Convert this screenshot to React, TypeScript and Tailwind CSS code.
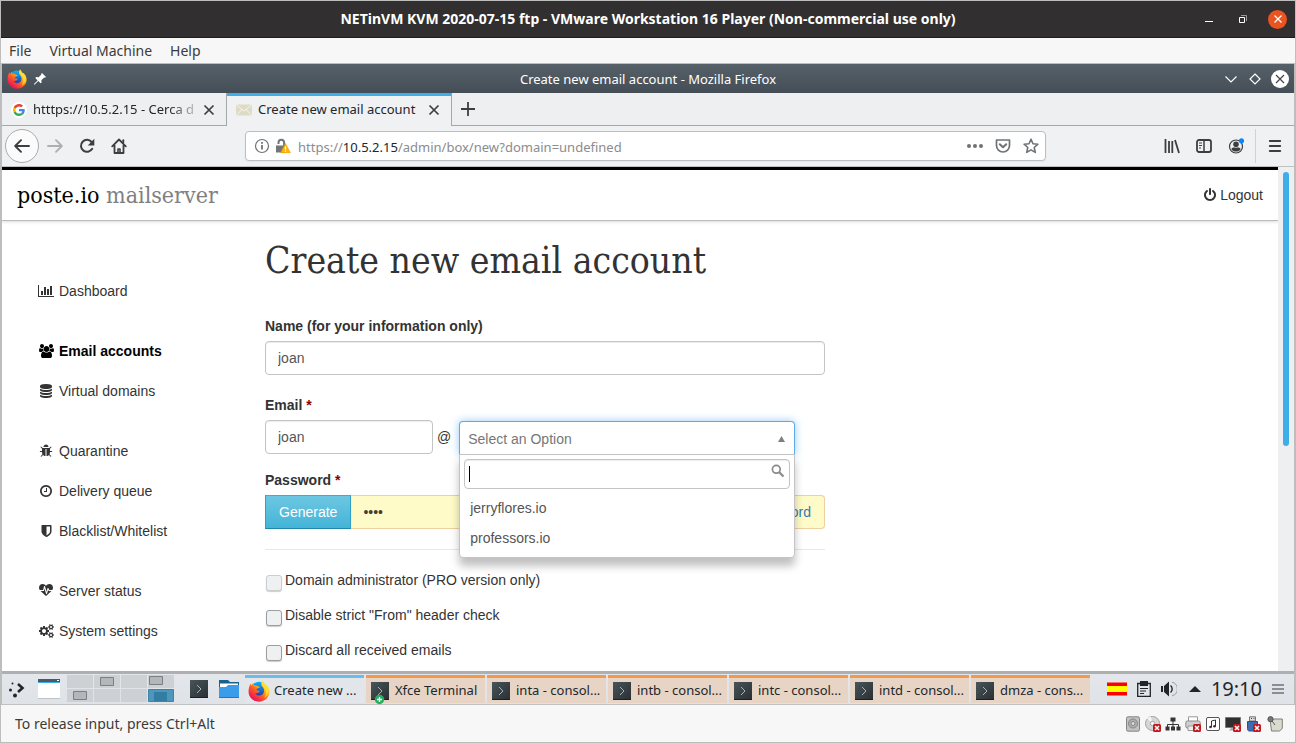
import React from "react";

const FA = {
  chart:
    "M640 896v512h-256v-512h256zm384-512v1024h-256v-1024h256zm1024 1152v128h-2048v-1536h128v1408h1920zm-640-896v768h-256v-768h256zm384-384v1152h-256v-1152h256z",
  users:
    "M593 896q-162 5-265 128h-134q-82 0-138-40.5t-56-118.5q0-353 124-353 6 0 43.5 21t97.5 42.5 119 21.5q67 0 133-23-5 37-5 66 0 139 81 256zm1071 637q0 120-73 189.5t-194 69.5h-874q-121 0-194-69.5t-73-189.5q0-53 3.5-103.5t14-109 26.5-108.5 43-97.5 62-81 85.5-53.5 111.5-20q10 0 43 21.5t73 48 107 48 135 21.5 135-21.5 107-48 73-48 43-21.5q61 0 111.5 20t85.5 53.5 62 81 43 97.5 26.5 108.5 14 109 3.5 103.5zm-1024-1277q0 106-75 181t-181 75-181-75-75-181 75-181 181-75 181 75 75 181zm704 384q0 159-112.5 271.5t-271.5 112.5-271.5-112.5-112.5-271.5 112.5-271.5 271.5-112.5 271.5 112.5 112.5 271.5zm576 225q0 78-56 118.5t-138 40.5h-134q-103-123-265-128 81-117 81-256 0-29-5-66 66 23 133 23 59 0 119-21.5t97.5-42.5 43.5-21q124 0 124 353zm-128-609q0 106-75 181t-181 75-181-75-75-181 75-181 181-75 181 75 75 181z",
  database:
    "M896 768q237 0 443-43t325-127v170q0 69-103 128t-280 93.5-385 34.5-385-34.5-280-93.5-103-128v-170q119 84 325 127t443 43zm0 768q237 0 443-43t325-127v170q0 69-103 128t-280 93.5-385 34.5-385-34.5-280-93.5-103-128v-170q119 84 325 127t443 43zm0-384q237 0 443-43t325-127v170q0 69-103 128t-280 93.5-385 34.5-385-34.5-280-93.5-103-128v-170q119 84 325 127t443 43zm0-1152q208 0 385 34.5t280 93.5 103 128v128q0 69-103 128t-280 93.5-385 34.5-385-34.5-280-93.5-103-128v-128q0-69 103-128t280-93.5 385-34.5z",
  bug:
    "M1696 960q0 26-19 45t-45 19h-224q0 171-67 290l208 209q19 19 19 45t-19 45q-18 19-45 19t-45-19l-198-197q-5 5-15 13t-42 28.5-65 36.5-82 29-97 13v-896h-128v896q-51 0-101.5-13.5t-87-33-66-39-43.5-32.5l-15-14-183 207q-20 21-48 21-24 0-43-16-19-18-20.5-44.5t15.5-46.5l202-227q-58-114-58-274h-224q-26 0-45-19t-19-45 19-45 45-19h224v-294l-173-173q-19-19-19-45t19-45 45-19 45 19l173 173h844l173-173q19-19 45-19t45 19 19 45-19 45l-173 173v294h224q26 0 45 19t19 45zm-480-576h-640q0-133 93.5-226.5t226.5-93.5 226.5 93.5 93.5 226.5z",
  clock:
    "M1024 544v448q0 14-9 23t-23 9h-320q-14 0-23-9t-9-23v-64q0-14 9-23t23-9h224v-352q0-14 9-23t23-9h64q14 0 23 9t9 23zm416 352q0-148-73-273t-198-198-273-73-273 73-198 198-73 273 73 273 198 198 273 73 273-73 198-198 73-273zm224 0q0 209-103 385.5t-279.5 279.5-385.5 103-385.5-103-279.5-279.5-103-385.5 103-385.5 279.5-279.5 385.5-103 385.5 103 279.5 279.5 103 385.5z",
  shield:
    "M1408 960v-640h-448v1137q119-63 213-137 235-184 235-360zm192-768v768q0 86-33.5 170.5t-83 150-118 127.5-126.5 103-121 77.5-89.5 49.5-42.5 20q-12 6-26 6t-26-6q-16-7-42.5-20t-89.5-49.5-121-77.5-126.5-103-118-127.5-83-150-33.5-170.5v-768q0-26 19-45t45-19h1152q26 0 45 19t19 45z",
  heartbeat:
    "M1280 896h305q-5 6-10 10.5t-9 7.5l-3 4-623 600q-18 18-44 18t-44-18l-624-602q-5-2-21-20h369q22 0 39.5-13.5t22.5-34.5l70-281 190 667q6 20 23 33t39 13q21 0 38-13t23-33l146-485 56 112q18 35 57 35zm512-428q0 145-103 300h-369l-111-221q-8-17-25.5-27t-36.5-8q-45 5-56 46l-129 430-196-686q-6-20-23.5-33t-39.5-13-39 13.5-22 34.5l-116 464h-423q-103-155-103-300 0-220 127-344t351-124q62 0 126.5 21.5t120 58 95.5 68.5 76 68q36-36 76-68t95.5-68.5 120-58 126.5-21.5q224 0 351 124t127 344z",
  cogs:
    "M896 896q0-106-75-181t-181-75-181 75-75 181 75 181 181 75 181-75 75-181zm768 512q0-52-38-90t-90-38-90 38-38 90q0 53 37.5 90.5t90.5 37.5 90.5-37.5 37.5-90.5zm0-1024q0-52-38-90t-90-38-90 38-38 90q0 53 37.5 90.5t90.5 37.5 90.5-37.5 37.5-90.5zm-384 421v185q0 10-7 19.5t-16 10.5l-155 24q-11 35-32 76 34 48 90 115 7 11 7 20 0 12-7 19-23 30-82.5 89.5t-78.5 59.5q-11 0-21-7l-115-90q-37 19-77 31-11 108-23 155-7 24-30 24h-186q-11 0-20-7.5t-10-17.5l-23-153q-34-10-75-31l-118 89q-7 7-20 7-11 0-21-8-144-133-144-160 0-9 7-19 10-14 41-53t47-61q-23-44-35-82l-152-24q-10-1-17-9.5t-7-19.5v-185q0-10 7-19.5t16-10.5l155-24q11-35 32-76-34-48-90-115-7-11-7-20 0-12 7-20 22-30 82-89t79-59q11 0 21 7l115 90q34-18 77-32 11-108 23-154 7-24 30-24h186q11 0 20 7.5t10 17.5l23 153q34 10 75 31l118-89q8-7 20-7 11 0 21 8 144 133 144 160 0 8-7 19-12 16-42 54t-45 60q23 48 34 82l152 23q10 2 17 10.5t7 19.5zm640 533v140q0 16-149 31-12 27-30 52 51 113 51 138 0 4-4 7-122 71-124 71-8 0-46-47t-52-68q-20 2-30 2t-30-2q-14 21-52 68t-46 47q-2 0-124-71-4-3-4-7 0-25 51-138-18-25-30-52-149-15-149-31v-140q0-16 149-31 13-29 30-52-51-113-51-138 0-4 4-7 4-2 35-20t59-34 30-16q8 0 46 46.5t52 67.5q20-2 30-2t30 2q51-71 92-112l6-2q4 0 124 70 4 3 4 7 0 25-51 138 17 23 30 52 149 15 149 31zm0-1024v140q0 16-149 31-12 27-30 52 51 113 51 138 0 4-4 7-122 71-124 71-8 0-46-47t-52-68q-20 2-30 2t-30-2q-14 21-52 68t-46 47q-2 0-124-71-4-3-4-7 0-25 51-138-18-25-30-52-149-15-149-31v-140q0-16 149-31 13-29 30-52-51-113-51-138 0-4 4-7 4-2 35-20t59-34 30-16q8 0 46 46.5t52 67.5q20-2 30-2t30 2q51-71 92-112l6-2q4 0 124 70 4 3 4 7 0 25-51 138 17 23 30 52 149 15 149 31z",
  power:
    "M1664 896q0 156-61 298t-164 245-245 164-298 61-298-61-245-164-164-245-61-298q0-182 80.5-343t226.5-270q43-32 95.5-25t83.5 50q32 42 24.5 94.5t-49.5 84.5q-98 74-151.5 181t-53.5 228q0 104 40.5 198.5t109.5 163.5 163.5 109.5 198.5 40.5 198.5-40.5 163.5-109.5 109.5-163.5 40.5-198.5q0-121-53.5-228t-151.5-181q-42-32-49.5-84.5t24.5-94.5q31-43 84-50t95 25q146 109 226.5 270t80.5 343zm-640-768v640q0 52-38 90t-90 38-90-38-38-90v-640q0-52 38-90t90-38 90 38 38 90z",
};

type IconName = keyof typeof FA;

function Glyph({ name, wide = 1792 }: { name: IconName; wide?: number }) {
  return (
    <svg viewBox={`0 0 ${wide} 1792`} className="h-3.5 w-auto" fill="currentColor" aria-hidden="true">
      <path d={FA[name]} />
    </svg>
  );
}

function Firefox({ className }: { className: string }) {
  return (
    <svg viewBox="0 0 20 20" className={className} aria-hidden="true">
      <defs>
        <linearGradient id="fox" x1="0.85" y1="0.1" x2="0.2" y2="0.9">
          <stop offset="0" stopColor="#fff44f" />
          <stop offset="0.35" stopColor="#ffb01f" />
          <stop offset="0.6" stopColor="#ff5a26" />
          <stop offset="1" stopColor="#e8115b" />
        </linearGradient>
        <linearGradient id="globe" x1="0.5" y1="0" x2="0.5" y2="1">
          <stop offset="0" stopColor="#0ab4f5" />
          <stop offset="1" stopColor="#2b2a9c" />
        </linearGradient>
      </defs>
      <circle cx="10" cy="9" r="7.4" fill="url(#globe)" />
      <path
        d="M13 .5c1 1 1.6 1.900 1.900 3C17.800 4.500 19.600 7.500 19.600 10.500 19.600 15.800 15.300 19.700 10 19.700 4.500 19.700.5 15.500.5 10.500.5 7.500 1.300 5 2.400 3.200L3 5.100C3.600 4.100 4.300 3 5.200 2.400 5 3.300 5.200 4.200 5.700 4.700c1 0 2 0 2.700.7l2 .5c.4.8-.3 1.200-1.600 1.600-.6.300-.6 1.200-1.500 1.600.6.6 1.700.4 2.500.7 1 .400.8 1.200-.2 1.500-1 .3-1.900 1.200-3.200.8 1 1.600 2.700 2.300 4.500 2 2.300-.4 3.700-2.100 3.700-4.400 0-2-1-3.300-2-4C11.800 4.300 11.800 2 13 .5Z"
        fill="url(#fox)"
      />
      <path d="M13 .5c1 1 1.600 1.900 1.900 3 3 1.300 4.200 4 4 7-.6 3-2 4.900-4.300 6 1.800-2.400 2-5 1.400-7C15.300 7 11.600 5 13 .5Z" fill="#ffdf33" opacity=".8" />
    </svg>
  );
}

function TerminalIcon({ plus = false }: { plus?: boolean }) {
  return (
    <svg viewBox="0 0 18 22" className="h-[22px] w-[18px] shrink-0 overflow-visible" aria-hidden="true">
      <defs>
        <linearGradient id="term" x1="0" y1="0" x2="1" y2="1">
          <stop offset="0" stopColor="#47555a" />
          <stop offset="1" stopColor="#2a2f33" />
        </linearGradient>
      </defs>
      <rect y="2" width="18" height="18" fill="url(#term)" />
      <path d="M0 19.500h18" stroke="#1d2023" />
      <path d="M7 7l4 4-4 4" fill="none" stroke="#aab3b6" strokeWidth="1" />
      {plus && (
        <g>
          <circle cx="8.500" cy="19.500" r="4.700" fill="#27ae60" />
          <path d="M8.500 17v5M6 19.500h5" stroke="#fff" strokeWidth="1.300" />
        </g>
      )}
    </svg>
  );
}

function HostTitleBar() {
  return (
    <header className="grid h-[37px] shrink-0 grid-cols-[1fr_auto_1fr] items-center border-b border-[#1f1e1e] bg-[#312f2f] text-white">
      <span />
      <h1 className="text-[14px] leading-5 font-bold">
        NETinVM KVM 2020-07-15 ftp - VMware Workstation 16 Player (Non-commercial use only)
      </h1>
      <div className="flex items-center justify-end pr-2">
        <button aria-label="Minimize" className="flex h-6 w-[34px] items-center justify-center">
          <svg viewBox="0 0 12 12" className="size-3"><path d="M2 8.500h8" stroke="#fff" /></svg>
        </button>
        <button aria-label="Restore" className="flex h-6 w-[34px] items-center justify-center">
          <svg viewBox="0 0 12 12" className="size-3" fill="none">
            <path d="M4 2.500h5.500V8" stroke="#999" />
            <path d="M2.500 4.500h5v5h-5z" stroke="#fff" />
          </svg>
        </button>
        <button aria-label="Close" className="ml-2 flex size-[19px] items-center justify-center rounded-full bg-[#e95420]">
          <svg viewBox="0 0 10 10" className="size-2.5"><path d="M1.500 1.500l7 7M8.500 1.500l-7 7" stroke="#fff" strokeWidth="1.300" /></svg>
        </button>
      </div>
    </header>
  );
}

function GuestTitleBar() {
  return (
    <div className="grid h-[29px] shrink-0 grid-cols-[1fr_auto_1fr] items-center bg-linear-to-b from-[#566069] to-[#454e56] text-white">
      <div className="flex items-center gap-1.5 pl-[5px]">
        <Firefox className="size-5" />
        <svg viewBox="0 0 14 14" className="size-3.5" fill="#fff" aria-hidden="true">
          <path d="M9 1l4 4-1 .7-.9-.1-2.700 2.600.200 2.200-1 .9-2.300-2.300L1.500 12.700l-.6-.6L4.600 8.400 2.300 6.100l1-1 2.300.200 2.600-2.600L8.200 1.800z" />
        </svg>
      </div>
      <span className="text-[13px] leading-5">Create new email account - Mozilla Firefox</span>
      <div className="flex items-center justify-end gap-2 pr-[5px]">
        <button aria-label="Minimize window" className="flex size-4 items-center justify-center">
          <svg viewBox="0 0 14 14" className="size-3.5" fill="none"><path d="M1.500 4.500L7 10l5.500-5.500" stroke="#fff" strokeWidth="1.200" /></svg>
        </button>
        <button aria-label="Maximize window" className="flex size-4 items-center justify-center">
          <svg viewBox="0 0 14 14" className="size-3.5" fill="none"><path d="M7 2l5 5-5 5-5-5z" stroke="#fff" strokeWidth="1.200" /></svg>
        </button>
        <button aria-label="Close window" className="flex size-[18px] items-center justify-center rounded-full bg-white">
          <svg viewBox="0 0 12 12" className="size-3"><path d="M2 2l8 8M10 2l-8 8" stroke="#3f474e" strokeWidth="1.200" /></svg>
        </button>
      </div>
    </div>
  );
}

function CloseX() {
  return (
    <svg viewBox="0 0 12 12" className="size-3"><path d="M1.500 1.500l9 9M10.500 1.500l-9 9" stroke="#3c3f42" strokeWidth="1.700" /></svg>
  );
}

function Tabs() {
  return (
    <div role="tablist" className="flex h-[33px] shrink-0 bg-[#eeeff1] text-[13px] text-[#232629]">
      <div role="tab" className="flex w-[225px] items-center border-r border-b border-[#a5a8ab] pt-0.5 pr-[11px] pl-[9px]">
        <span className="flex size-4 shrink-0 items-center justify-center rounded-full bg-white">
          <svg viewBox="0 0 48 48" className="size-3" aria-hidden="true">
            <path fill="#EA4335" d="M24 9.500c3.540 0 6.710 1.220 9.210 3.600l6.850-6.850C35.900 2.380 30.470 0 24 0 14.620 0 6.510 5.380 2.560 13.220l7.980 6.190C12.430 13.720 17.740 9.500 24 9.500z" />
            <path fill="#4285F4" d="M46.980 24.550c0-1.570-.15-3.090-.38-4.550H24v9.020h12.940c-.58 2.960-2.260 5.480-4.780 7.180l7.730 6c4.510-4.180 7.090-10.360 7.090-17.650z" />
            <path fill="#FBBC05" d="M10.530 28.590c-.48-1.450-.76-2.990-.76-4.590s.27-3.140.76-4.590l-7.980-6.190C.92 16.460 0 20.120 0 24c0 3.880.92 7.540 2.560 10.780l7.970-6.190z" />
            <path fill="#34A853" d="M24 48c6.480 0 11.930-2.130 15.890-5.810l-7.730-6c-2.150 1.450-4.920 2.300-8.160 2.300-6.260 0-11.570-4.220-13.470-9.910l-7.980 6.190C6.510 42.620 14.620 48 24 48z" />
          </svg>
        </span>
        <span className="ml-1.5 min-w-0 flex-1 mask-r-from-80% mask-r-to-100% whitespace-nowrap">htttps://10.5.2.15 - Cerca d</span>
        <button aria-label="Close first tab" className="shrink-0"><CloseX /></button>
      </div>
      <div role="tab" aria-selected="true" className="flex w-[225px] items-center border-t-3 border-r border-t-[#3daee9] border-r-[#a5a8ab] bg-[#f0f1f3] pr-[11px] pb-0.5 pl-[9px]">
        <svg viewBox="0 0 16 12" className="h-3 w-4 shrink-0" aria-hidden="true">
          <path d="M0 .5h16v11H0z" fill="#dddbc6" />
          <path d="M0 .5l8 6.500 8-6.500M0 11.500l6-6M16 11.500l-6-6" fill="none" stroke="#f6f5ea" />
        </svg>
        <span className="mx-1.5 min-w-0 flex-1 whitespace-nowrap">Create new email account</span>
        <button aria-label="Close current tab" className="shrink-0"><CloseX /></button>
      </div>
      <div className="flex flex-1 items-center border-b border-[#a5a8ab] pl-2">
        <button aria-label="New tab">
          <svg viewBox="0 0 16 16" className="size-4"><path d="M8 1v14M1 8h14" stroke="#3c3f42" strokeWidth="1.800" /></svg>
        </button>
      </div>
    </div>
  );
}

function Toolbar() {
  return (
    <div className="flex h-[41px] shrink-0 items-center border-b border-[#bfc0c2] bg-[#f0f1f3] text-[#3c3f42]">
      <div className="flex w-[243px] shrink-0 items-center pl-[3px]">
        <button aria-label="Back" className="flex size-[34px] items-center justify-center rounded-full border border-[#a9abad] bg-[#fbfbfc]">
          <svg viewBox="0 0 16 16" className="size-4" fill="none" stroke="currentColor" strokeWidth="1.900" strokeLinecap="round" strokeLinejoin="round"><path d="M15 8H1.500M7 2.200L1.200 8 7 13.800" /></svg>
        </button>
        <button aria-label="Forward" className="flex size-8 items-center justify-center text-[#adafb1]">
          <svg viewBox="0 0 16 16" className="size-4" fill="none" stroke="currentColor" strokeWidth="1.900" strokeLinecap="round" strokeLinejoin="round"><path d="M1 8h13.500M9 2.200L14.800 8 9 13.800" /></svg>
        </button>
        <button aria-label="Reload" className="flex size-8 items-center justify-center">
          <svg viewBox="0 0 16 16" className="size-4"><path d="M13.200 10.800A6 6 0 1 1 12.600 4" fill="none" stroke="currentColor" strokeWidth="2" strokeLinecap="round" /><path d="M15.300.8v6.600H8.800z" fill="currentColor" /></svg>
        </button>
        <button aria-label="Home" className="flex size-8 items-center justify-center">
          <svg viewBox="0 0 16 16" className="size-4" fill="none" stroke="currentColor" strokeWidth="1.800" strokeLinejoin="round" strokeLinecap="round"><path d="M1.200 8.300L8 1.500l6.800 6.800M3.500 7v8h9V7" /><path d="M7 15v-4h2v4" strokeWidth="1.600" /><path d="M12.300 4.500V2.200" /></svg>
        </button>
      </div>
      <div className="flex h-[30px] w-[62%] items-center rounded-sm border border-[#bcbebf] bg-white pr-1.5 pl-2 text-[#6f7274] shadow-xs">
        <svg viewBox="0 0 16 16" className="size-4 shrink-0" fill="none" stroke="currentColor" aria-hidden="true"><circle cx="8" cy="8" r="6.500" strokeWidth="1.200" /><path d="M8 7v4.500" strokeWidth="1.800" /><path d="M8 4v1.800" strokeWidth="1.800" /></svg>
        <svg viewBox="0 0 16 16" className="ml-[5px] size-4 shrink-0" aria-hidden="true">
          <path d="M3.500 6V4.500a2.800 2.800 0 0 1 5.600 0V8" fill="none" stroke="#737577" strokeWidth="2" />
          <path d="M1 7.500h9v7H1z" fill="#737577" />
          <path d="M10.500 5.500l4.800 9.200H5.700z" fill="#ffb700" stroke="#e79a00" strokeWidth=".6" strokeLinejoin="round" />
          <path d="M10.500 8.600v3M10.500 12.500v1.200" stroke="#fff" strokeWidth="1.200" />
        </svg>
        <div className="ml-[7px] flex-1 pt-0.5 text-[13px] leading-5 whitespace-nowrap">
          <a href="https://10.5.2.15/admin/box/new?domain=undefined" className="text-[#8a8c8e]">
            https://<span className="text-[#232629]">10.5.2.15</span>/admin/box/new?domain=undefined
          </a>
        </div>
        <button aria-label="Page actions"><svg viewBox="0 0 16 16" className="size-4" fill="currentColor"><circle cx="2" cy="8" r="2" /><circle cx="8" cy="8" r="2" /><circle cx="14" cy="8" r="2" /></svg></button>
        <button aria-label="Save to Pocket" className="ml-3"><svg viewBox="0 0 16 16" className="size-4" fill="none" stroke="currentColor" strokeWidth="1.700" strokeLinecap="round" strokeLinejoin="round"><path d="M1.500 2h13v5.500a6.500 6.500 0 0 1-13 0z" /><path d="M4.800 6.300L8 9.300l3.200-3" strokeWidth="2" /></svg></button>
        <button aria-label="Bookmark this page" className="ml-3"><svg viewBox="0 0 16 16" className="size-4" fill="none" stroke="currentColor" strokeWidth="1.600" strokeLinejoin="round"><path d="M8 1.200l2 4.500 4.900.5-3.700 3.300 1.100 4.900L8 11.900l-4.300 2.500 1.100-4.900L1.100 6.200 6 5.700z" /></svg></button>
      </div>
      <div className="ml-auto flex h-full items-center">
        <button aria-label="Library" className="flex size-8 items-center justify-center">
          <svg viewBox="0 0 16 16" className="size-4" stroke="currentColor" strokeWidth="1.800"><path d="M1.500 1v14M5 3v12M8.300 3v12M11 2l4 13" /></svg>
        </button>
        <button aria-label="Sidebars" className="flex size-8 items-center justify-center">
          <svg viewBox="0 0 16 16" className="size-4" fill="none" stroke="currentColor"><rect x="1" y="2" width="14" height="12" rx="2" strokeWidth="1.800" /><path d="M8 2v12" strokeWidth="1.500" /><path d="M3 5h3M3 7.500h3M3 10h2" /></svg>
        </button>
        <button aria-label="Account" className="flex size-8 items-center justify-center">
          <svg viewBox="0 0 16 16" className="size-4"><circle cx="8" cy="8.500" r="6.500" fill="none" stroke="currentColor" strokeWidth="1.200" /><circle cx="8" cy="6.300" r="2.800" fill="currentColor" /><path d="M3.300 11c1.300-2 3-1.600 4.700-1.200 1.700-.4 3.400-.8 4.700 1.200-1 1.800-2.800 2.600-4.700 2.600S4.300 12.800 3.300 11z" fill="currentColor" /><circle cx="13.500" cy="2.800" r="2.600" fill="#0a84ff" /></svg>
        </button>
        <span className="ml-[3px] h-[34px] border-l border-[#d0d2d4]" />
        <button aria-label="Open menu" className="flex h-8 w-[38px] items-center justify-center">
          <svg viewBox="0 0 16 16" className="size-4" stroke="currentColor" strokeWidth="1.900" strokeLinecap="round"><path d="M2.800 3h10.400M2.800 8h10.400M2.800 13h10.400" /></svg>
        </button>
      </div>
    </div>
  );
}

const NAV: { label: string; icon: IconName; wide?: number; active?: boolean }[][] = [
  [{ label: "Dashboard", icon: "chart", wide: 2048 }],
  [
    { label: "Email accounts", icon: "users", wide: 1920, active: true },
    { label: "Virtual domains", icon: "database" },
  ],
  [
    { label: "Quarantine", icon: "bug" },
    { label: "Delivery queue", icon: "clock" },
    { label: "Blacklist/Whitelist", icon: "shield" },
  ],
  [
    { label: "Server status", icon: "heartbeat" },
    { label: "System settings", icon: "cogs", wide: 1920 },
  ],
];

const SLAB = "font-['Roboto_Slab','DejaVu_Serif_Condensed','DejaVu_Serif',serif]";
const FIELD =
  "h-[34px] rounded-sm border border-[#c4c4c4] bg-white px-3 text-[#555] shadow-[inset_0_1px_1px_rgba(0,0,0,0.075)] outline-none";

function Sidebar() {
  return (
    <nav className="flex w-[263px] shrink-0 flex-col gap-5 pt-[50px] pl-[35px]">
      {NAV.map((group, i) => (
        <ul key={i}>
          {group.map((item) => (
            <li key={item.label}>
              <a href="#" className={item.active ? "flex h-10 items-center gap-1 font-bold text-black" : "flex h-10 items-center gap-1 text-[#333]"}>
                <span className="flex w-[18px] justify-center"><Glyph name={item.icon} wide={item.wide} /></span>
                {item.label}
              </a>
            </li>
          ))}
        </ul>
      ))}
    </nav>
  );
}

function DomainSelect() {
  return (
    <div className="relative ml-2 w-[60%] self-end">
      <button
        type="button"
        id="domain"
        aria-haspopup="listbox"
        aria-expanded="true"
        className="flex h-[34px] w-full items-center justify-between rounded-t-sm border border-b-0 border-[#5fa8e6] bg-white pr-[9px] pl-2 text-[#777] shadow-[0_0_8px_rgba(82,168,236,0.6)]"
      >
        Select an Option
        <svg viewBox="0 0 7 6" className="h-1.5 w-[7px]"><path d="M3.500 0L7 6H0z" fill="#808080" /></svg>
      </button>
      <div className="absolute inset-x-0 top-full z-10 -mt-px rounded-b-sm border border-[#c4c4c4] bg-white p-1 shadow-[0_8px_8px_rgba(0,0,0,0.25)]">
        <div className="relative">
          <input aria-label="Search domains" className="block h-[30px] w-full rounded-sm border border-[#c4c4c4] pr-6 pl-1.5 shadow-[inset_0_1px_1px_rgba(0,0,0,0.075)] outline-none" />
          <span className="absolute top-[7px] left-[5px] h-4 border-l border-black" />
          <svg viewBox="0 0 14 14" className="absolute top-[5px] right-[5px] size-3.5" fill="none" stroke="#8a8a8a" aria-hidden="true">
            <circle cx="5.300" cy="5.300" r="3.900" strokeWidth="1.700" />
            <path d="M8.200 8.200l4.300 4.300" strokeWidth="2.200" />
          </svg>
        </div>
        <ul role="listbox" aria-label="Domains" className="pt-1 text-[#555]">
          <li role="option" aria-selected="false" className="h-[30px] px-1.5 leading-[30px]">jerryflores.io</li>
          <li role="option" aria-selected="false" className="h-[30px] px-1.5 leading-[30px]">professors.io</li>
        </ul>
      </div>
    </div>
  );
}

const CHECKS = [
  { id: "admin", label: "Domain administrator (PRO version only)", disabled: true },
  { id: "strict", label: 'Disable strict "From" header check', disabled: false },
  { id: "discard", label: "Discard all received emails", disabled: false },
];

function AccountForm() {
  return (
    <main className="min-w-0 flex-1 pt-5">
      <form className="max-w-[560px]">
        <h2 className={`${SLAB} text-[37px] leading-10 whitespace-nowrap text-[#333]`}>Create new email account</h2>
        <label htmlFor="name" className="mt-[35px] mb-[5px] block font-bold">Name (for your information only)</label>
        <input id="name" defaultValue="joan" className={`${FIELD} block w-full`} />

        <label htmlFor="email" className="mt-5 mb-[5px] block font-bold">Email <span className="text-[#8b0000]">*</span></label>
        <div className="flex h-[35px] items-start">
          <input id="email" defaultValue="joan" className={`${FIELD} w-[30%]`} />
          <span className="ml-1 leading-[34px]">@</span>
          <DomainSelect />
        </div>

        <label htmlFor="password" className="mt-[15px] mb-[5px] block font-bold">Password <span className="text-[#8b0000]">*</span></label>
        <div className="flex h-[34px]">
          <button type="button" className="border border-x-[#2fa0c6] border-t-[#3aafd4] border-b-[#1f87ab] bg-linear-to-b from-[#6cc7e2] to-[#43b4d8] px-[13px] text-white">Generate</button>
          <input id="password" type="password" defaultValue="1234" className="min-w-0 flex-1 border border-l-0 border-[#ecd0a0] bg-[#fffbc8] px-3 text-[#4a3b35] outline-none" />
          <button type="button" className="rounded-r-sm border border-l-0 border-[#ecd0a0] bg-[#fffbc8] px-[13px] text-[#337ab7]">Show password</button>
        </div>
        <hr className="mt-5 mb-5 border-[#e8e8e8]" />
        <div className="flex flex-col gap-[15px]">
          {CHECKS.map((c) => (
            <div key={c.id} className="flex h-5 gap-[3px] pl-px">
              <input
                id={c.id}
                type="checkbox"
                disabled={c.disabled}
                className="mt-[5px] size-4 appearance-none rounded-[3px] border border-[#9b9ea1] bg-[#eff0f1] shadow-[0_1px_1px_rgba(0,0,0,0.2)] disabled:border-[#cccdce]"
              />
              <label htmlFor={c.id}>{c.label}</label>
            </div>
          ))}
        </div>
      </form>
    </main>
  );
}

function WebPage() {
  return (
    <div className="flex min-h-0 flex-1 bg-[#eeeff1]">
      <div className="flex min-w-0 flex-1 flex-col overflow-hidden bg-white font-['Liberation_Sans',Arial,sans-serif] text-[14px] leading-5 text-[#333]">
        <div className="flex h-[54px] shrink-0 items-center justify-between border-t-3 border-b border-t-black border-b-[#bbb] px-[15px] pb-px shadow-[0_1px_3px_rgba(0,0,0,0.15)]">
          <a href="#" className={`${SLAB} text-[23px] text-[#808080]`}><span className="text-black">poste.io</span> mailserver</a>
          <a href="#" className="flex items-center gap-[3px]"><Glyph name="power" />Logout</a>
        </div>
        <div className="flex">
          <Sidebar />
          <AccountForm />
        </div>
      </div>
      <div className="w-4 pt-[5px] pl-[5px]">
        <div className="h-[274px] w-1.5 rounded-full bg-[#3daee9]" />
      </div>
    </div>
  );
}

const TASKS = ["Xfce Terminal", "inta - consol...", "intb - consol...", "intc - consol...", "intd - consol...", "dmza - cons..."];

function Taskbar() {
  return (
    <div className="flex h-[34px] shrink-0 border-t-3 border-b border-t-[#adafb1] border-b-[#bfc1c3] bg-linear-to-b from-[#e3e6ea] to-[#dfe2e6] text-[13px] text-[#232629]">
      <button aria-label="Application launcher" className="w-[31px] pl-1.5">
        <svg viewBox="0 0 18 18" className="size-[18px]" fill="#232629"><circle cx="4.500" cy="3.500" r="1" /><circle cx="2.500" cy="10" r="1.500" /><circle cx="7" cy="15.500" r="2" /><path d="M10 4l4.500 4L10 12" fill="none" stroke="#232629" strokeWidth="2.600" /></svg>
      </button>
      <button aria-label="Show desktop" className="w-[34px] pl-[5px]">
        <svg viewBox="0 0 22 20" className="h-5 w-[22px]"><path d="M0 0h22v19H0z" fill="#fff" /><path d="M0 0h22v3H0z" fill="#4d5a63" /><path d="M0 3h22v1H0z" fill="#3daee9" /><path d="M19 1.500h2" stroke="#fff" /><path d="M0 19.500h22" stroke="#bfc3c6" /></svg>
      </button>
      <svg viewBox="0 0 107 27" className="mt-px h-[27px] w-[107px] shrink-0" aria-label="Virtual desktops" role="img">
        <path d="M0 0h26v13H0zM27 0h26v13H27zM54 0h26v13H54zM81 0h26v13H81zM0 14h26v13H0zM27 14h26v13H27zM54 14h26v13H54z" fill="#ced1d4" />
        <path d="M81.500 14.500h25v12h-25z" fill="#4f96bd" stroke="#3b85ad" />
        <path d="M87 17h13v9H87z" fill="#327ea3" />
        <path d="M33.500 2.500h13v8h-13zM82.500 1.500h13v8h-13zM6.500 16.500h13v8h-13z" fill="#b3b7ba" stroke="#7b7f83" />
      </svg>
      <button aria-label="Terminal" className="ml-4 flex w-[18px] items-center"><TerminalIcon /></button>
      <button aria-label="Files" className="ml-[11px]">
        <svg viewBox="0 0 20 18" className="h-[18px] w-5">
          <path d="M0 0h9l2 2h9v14H0z" fill="#17618f" />
          <path d="M1 3.500h18v6H1z" fill="#fff" />
          <path d="M0 7h7l2-2h11v13H0z" fill="#3b9cea" />
          <path d="M0 17.500h20" stroke="#2777b8" />
        </svg>
      </button>
      <div className="ml-1.5 flex min-w-0 flex-1 gap-0.5 pt-px pb-px">
        <button className="flex w-[119px] items-center gap-1 border-t-3 border-[#6bbde8] bg-[#e2e6ea] pl-[3px] whitespace-nowrap">
          <Firefox className="size-[22px] shrink-0" />Create new ...
        </button>
        {TASKS.map((t, i) => (
          <button key={t} className="flex w-[119px] items-center gap-1.5 border-t-3 border-[#f2994b] bg-[#e7d4c5] pl-[5px] whitespace-nowrap">
            <TerminalIcon plus={i === 0} />{t}
          </button>
        ))}
      </div>
      <div className="flex shrink-0 items-center pr-2.5">
        <svg viewBox="0 0 20 14" className="mr-2.5 h-3.5 w-5" aria-label="Spanish keyboard" role="img"><path d="M0 .5h20v13H0z" fill="#f00" /><path d="M0 4h20v6H0z" fill="#ff0" /></svg>
        <button aria-label="Clipboard" className="mr-2.5"><svg viewBox="0 0 14 16" className="h-4 w-3.5"><path d="M.7 2.500h12.600v12.800H.7z" fill="none" stroke="#232629" strokeWidth="1.300" /><path d="M3 0h8v5H3zM3 7h8v1H3zM3 9.500h6v1H3zM3 12h4v1H3z" fill="#232629" /></svg></button>
        <button aria-label="Volume" className="mr-3"><svg viewBox="0 0 16 16" className="size-4"><path d="M0 5h2v6H0zM3 5l5-4.500v15L3 11z" fill="#232629" /><path d="M9.500 4.500a4.500 4.500 0 0 1 0 7" fill="none" stroke="#232629" strokeWidth="1.400" /><path d="M11 1.200a7 7 0 0 1 0 13.600" fill="none" stroke="#9a9da0" /></svg></button>
        <button aria-label="Show hidden icons" className="mr-2.5"><svg viewBox="0 0 12 6" className="h-1.5 w-3"><path d="M6 0l6 6H0z" fill="#232629" /></svg></button>
        <time className="mr-2.5 text-[20px] leading-7">19:10</time>
        <button aria-label="Panel options"><svg viewBox="0 0 12 10" className="h-2.5 w-3" stroke="#6f7375" strokeWidth="1.500"><path d="M0 1h12M0 5h12M0 9h12" /></svg></button>
      </div>
    </div>
  );
}

function Crossed() {
  return (
    <g>
      <rect x="8" y="8" width="8" height="8" rx="1.500" fill="#c4161c" />
      <path d="M10 10l4 4M14 10l-4 4" stroke="#fff" strokeWidth="1.500" />
    </g>
  );
}

function StatusBar() {
  const box = "size-4";
  return (
    <footer className="flex h-[37px] shrink-0 items-center justify-between bg-[#f7f7f7] pr-3 pl-3.5 text-[14px] text-[#3c3b37]">
      <p>To release input, press Ctrl+Alt</p>
      <div className="flex items-center gap-1">
        <svg viewBox="0 0 16 16" className={box} role="img" aria-label="Hard disk"><rect x="1.500" y=".8" width="13" height="14.400" rx="1.500" fill="#c2c2c2" stroke="#858585" /><circle cx="8" cy="7.500" r="4.500" fill="#b0b0b0" stroke="#858585" /><circle cx="8" cy="7.500" r="2" fill="#ddd" stroke="#858585" /></svg>
        <svg viewBox="0 0 16 16" className={box} role="img" aria-label="CD/DVD"><circle cx="7.500" cy="7.500" r="7" fill="#d6d6d6" stroke="#a2a2a2" /><path d="M7.500 7.500L2 2.500A7 7 0 0 1 6 .8z" fill="#f5f5f5" /><circle cx="7.500" cy="7.500" r="2.200" fill="#f7f7f7" stroke="#a2a2a2" /><Crossed /></svg>
        <svg viewBox="0 0 16 16" className={box} role="img" aria-label="Network" fill="#363636"><path d="M5.500 1.500h5v4h-5zM.5 10.500h4v4h-4zM6 10.500h4v4H6zM11.500 10.500h4v4h-4z" /><path d="M8 5v6M2.500 11V8.500h11V11" fill="none" stroke="#363636" /></svg>
        <svg viewBox="0 0 16 16" className={box} role="img" aria-label="Printer"><path d="M3.500.8h9V6h-9z" fill="#fff" stroke="#999" /><rect x=".8" y="5" width="14.400" height="7" rx="1.500" fill="#cfcfcf" stroke="#8c8c8c" /><path d="M3 10h8v4.500H3z" fill="#eee" stroke="#999" /><Crossed /></svg>
        <svg viewBox="0 0 16 16" className={box} role="img" aria-label="Sound"><rect x="1.500" y="1.500" width="13" height="13" rx="1.500" fill="#fff" stroke="#555" /><path d="M6.500 11V5l4-1v6" fill="none" stroke="#333" /><circle cx="5.500" cy="11" r="1.300" fill="#333" /><circle cx="9.500" cy="10.200" r="1.300" fill="#333" /></svg>
        <svg viewBox="0 0 16 16" className={box} role="img" aria-label="Display"><path d="M.5 1.500h15v10H.5z" fill="#2f2f2f" stroke="#777" /><path d="M4 14.500h8L10 12H6z" fill="#aaa" /><Crossed /></svg>
        <svg viewBox="0 0 16 16" className={box} role="img" aria-label="USB"><path d="M4.500.8h6V5h-6z" fill="#ddd" stroke="#777" /><path d="M6 2.500h1M8.500 2.500h1" stroke="#444" /><path d="M2.500 5.500h10v7a2 2 0 0 1-2 2.500h-6a2 2 0 0 1-2-2.500z" fill="#3d6db0" stroke="#29528c" /><Crossed /></svg>
        <svg viewBox="0 0 16 16" className="ml-0.5 size-4" role="img" aria-label="Messages"><path d="M3 3h12.300v9.500L12.500 15H4.500z" fill="#d9dbcf" stroke="#7d7f75" /><circle cx="3.500" cy="3.200" r="2.600" fill="#777" stroke="#555" /><path d="M5 5l3 4" stroke="#555" /></svg>
      </div>
    </footer>
  );
}

export default function App() {
  return (
    <div className="flex h-screen flex-col border border-[#bdbdbd] bg-[#f7f7f7] font-['Noto_Sans','Open_Sans',sans-serif]">
      <HostTitleBar />
      <nav className="flex h-[26px] shrink-0 items-center gap-[18px] border-b border-[#bdbdbd] pl-2 text-[14px] text-[#3c3b37]">
        <button>File</button>
        <button>Virtual Machine</button>
        <button>Help</button>
      </nav>
      <div className="flex min-h-0 flex-1 flex-col border-x border-[#bdbdbd]">
        <GuestTitleBar />
        <Tabs />
        <Toolbar />
        <WebPage />
        <Taskbar />
      </div>
      <StatusBar />
    </div>
  );
}
